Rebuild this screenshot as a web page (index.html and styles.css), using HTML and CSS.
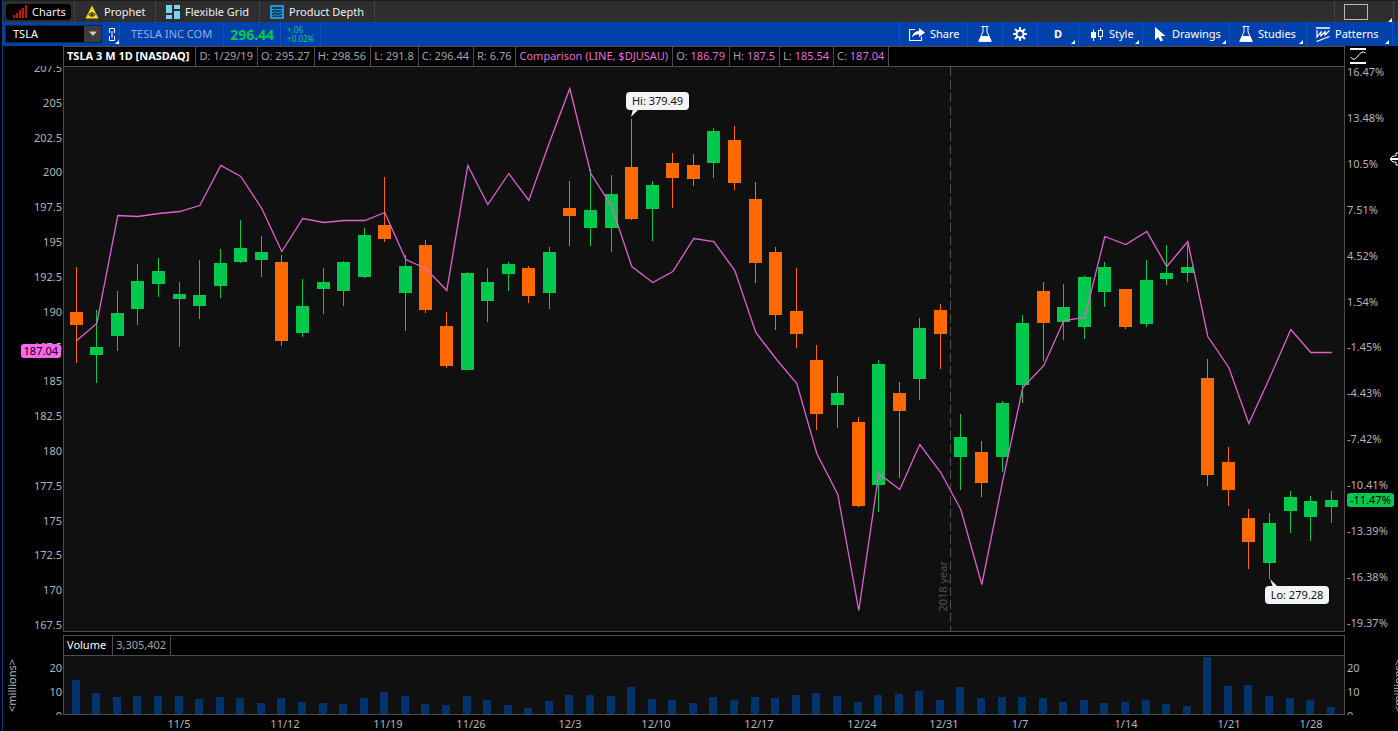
FILE: index.html
```html
<!DOCTYPE html>
<html lang="en">
<head>
<meta charset="utf-8">
<title>TSLA - Charts</title>
<link rel="stylesheet" href="styles.css">
</head>
<body>
<div class="app">
  <nav class="tabs">
    <button class="tab tab-charts"><span class="pill">
      <svg width="16" height="14" viewBox="0 0 16 14"><g fill="#c4160f"><rect x="0" y="10" width="2" height="3"/><rect x="3" y="8" width="2" height="5"/><rect x="6" y="5" width="2" height="8"/><rect x="9" y="3" width="2" height="10"/><rect x="12" y="0" width="2" height="13"/></g></svg>
      Charts</span></button>
    <button class="tab tab-prophet"><svg width="14" height="14" viewBox="0 0 14 14"><path d="M7 0.500L13.500 13.500H0.500Z" fill="#f7d823"/><path d="M3.500 9.500Q7 6 10.500 9.500Q7 13 3.500 9.500Z" fill="none" stroke="#3a3000"/><circle cx="7" cy="9.500" r="1.500" fill="#3a3000"/></svg>Prophet</button>
    <button class="tab tab-grid"><svg width="14" height="14" viewBox="0 0 14 14"><g fill="#7fd0f5"><rect x="0" y="0" width="6" height="8"/><rect x="0" y="10" width="6" height="4"/><rect x="8" y="0" width="6" height="4"/><rect x="8" y="6" width="6" height="8"/></g></svg>Flexible Grid</button>
    <button class="tab tab-depth"><svg width="14" height="14" viewBox="0 0 14 14"><rect x="1" y="1" width="12" height="12" fill="#0d3c5c" stroke="#2094dc" stroke-width="2"/><path d="M2 4.500H12M2 8L5 6.500L8 8L12 6M2 11L5 9.500L8 11L12 9" fill="none" stroke="#2094dc"/></svg>Product Depth</button>
    <button class="tab window-menu" aria-label="Window layout"><svg width="24" height="16" viewBox="0 0 24 16"><rect x="0.500" y="0.500" width="23" height="15" fill="none" stroke="#b8b8b8"/></svg><i class="corner"></i></button>
  </nav>

  <header class="toolbar">
    <div class="symbol-box">
      <input class="symbol" type="text" value="TSLA" aria-label="Symbol">
      <button class="symbol-arrow" aria-label="Symbol list"><svg width="10" height="6" viewBox="0 0 10 6"><path d="M1 0.500H9L5 5Z" fill="#c8c8c8"/></svg></button>
    </div>
    <button class="link-button" aria-label="Link symbol"><svg width="6" height="13" viewBox="0 0 6 13"><path d="M0.500 5V0.500H5.500V5M0.500 8V12.500H5.500V8M3 3V10" fill="none" stroke="#fff"/></svg><i class="corner"></i></button>
    <span class="company">TESLA INC COM</span>
    <strong class="price">296.44</strong>
    <span class="change"><span>+.06</span><span>+0.02%</span></span>
    <div class="tools">
      <button class="tool share"><svg width="16" height="13" viewBox="0 0 16 13"><path d="M6 1.500H0.500V12.500H12.500V8.500" fill="none" stroke="#fff" stroke-width="1.200"/><path d="M10 0L16 4.500L10 9V6.200Q6 6 3 9.500Q4 3.500 10 2.800Z" fill="#fff"/></svg>Share</button>
      <button class="tool icon-only" aria-label="Lab"><svg class="flask" width="14" height="16" viewBox="0 0 14 16"><path d="M3.500 0.500H10.500M5 0.500V6L0.800 15.300H13.200L9 6V0.500" fill="none" stroke="#fff"/><path d="M3 10H11L13.500 15.500H0.500Z" fill="#fff"/></svg></button>
      <button class="tool icon-only" aria-label="Settings"><svg width="14" height="14" viewBox="0 0 14 14"><circle cx="7" cy="7" r="3.500" fill="none" stroke="#fff" stroke-width="2"/><path d="M7 0V3M7 11V14M0 7H3M11 7H14M2 2L4.200 4.200M9.800 9.800L12 12M12 2L9.800 4.200M4.200 9.800L2 12" stroke="#fff" stroke-width="2"/></svg></button>
      <button class="tool period">D<i class="corner"></i></button>
      <button class="tool style"><svg width="12" height="13" viewBox="0 0 12 13"><path d="M2.500 1.500V13M9.500 0V12" stroke="#fff"/><rect x="0" y="4" width="5" height="6" fill="#fff"/><rect x="7.500" y="2.500" width="4" height="6" fill="#0041ab" stroke="#fff"/></svg>Style<i class="corner"></i></button>
      <button class="tool drawings"><svg width="12" height="15" viewBox="0 0 12 15"><path d="M1 0V13L4.200 10L6.500 14.500L9 13.500L7 9H11.500Z" fill="#fff"/></svg>Drawings<i class="corner"></i></button>
      <button class="tool studies"><svg class="flask" width="14" height="16" viewBox="0 0 14 16"><path d="M3.500 0.500H10.500M5 0.500V6L0.800 15.300H13.200L9 6V0.500" fill="none" stroke="#fff"/><path d="M3 10H11L13.500 15.500H0.500Z" fill="#fff"/></svg>Studies<i class="corner"></i></button>
      <button class="tool patterns"><svg width="14" height="15" viewBox="0 0 14 15"><path d="M0 1H14" stroke="#fff" stroke-width="1.500"/><path d="M1 3V10L5 5V9L9 4.500V8L13.500 3.500M0.500 14.500L13.500 9.500" fill="none" stroke="#fff" stroke-width="1.200"/></svg>Patterns<i class="corner"></i></button>
    </div>
  </header>

  <main class="workspace">
    <section class="row price-row">
      <div class="axis price-axis">
        <div class="price-labels">
          <span>207.5</span><span>205</span><span>202.5</span><span>200</span><span>197.5</span><span>195</span><span>192.5</span><span>190</span><span>187.5</span><span>185</span><span>182.5</span><span>180</span><span>177.5</span><span>175</span><span>172.5</span><span>170</span><span>167.5</span>
        </div>
        <span class="badge badge-comparison">187.04</span>
      </div>
      <div class="panel">
        <div class="quote">
          <b>TSLA 3 M 1D [NASDAQ]</b><span>D: 1/29/19</span><span>O: 295.27</span><span>H: 298.56</span><span>L: 291.8</span><span>C: 296.44</span><span>R: 6.76</span><span class="pink">Comparison (LINE, $DJUSAU)</span><span>O: <em>186.79</em></span><span>H: <em>187.5</em></span><span>L: <em>185.54</em></span><span>C: <em>187.04</em></span>
        </div>
        <div class="plot">
          <svg id="candles" viewBox="0 0 1280 564" preserveAspectRatio="none"></svg>
          <span class="year">2018 year</span>
          <span class="callout hi">Hi: 379.49<svg width="8" height="8" viewBox="0 0 8 8"><path d="M2 0H8L0 8Z" fill="#f4f4f4"/></svg></span>
          <span class="callout lo">Lo: 279.28<svg width="8" height="8" viewBox="0 0 8 8"><path d="M0 0L8 8H3Z" fill="#f4f4f4"/></svg></span>
        </div>
      </div>
      <div class="axis percent-axis">
        <svg class="scale-icon" width="16" height="17" viewBox="0 0 16 17"><path d="M0 2H16M0 16H16" stroke="#fff" stroke-width="2"/><path d="M0.500 10Q4 15 8 9T15.500 6" fill="none" stroke="#fff"/></svg>
        <span>16.47%</span><span>13.48%</span><span>10.5%</span><span>7.51%</span><span>4.52%</span><span>1.54%</span><span>-1.45%</span><span>-4.43%</span><span>-7.42%</span><span>-10.41%</span><span>-13.39%</span><span>-16.38%</span><span>-19.37%</span>
        <span class="badge badge-last">-11.47%</span>
        <svg class="pointer" width="9" height="14" viewBox="0 0 9 14"><path d="M9 1H7V4H4L1 7L4 10H7V13H9" fill="#000" stroke="#fff"/><path d="M2 7H9" stroke="#fff" stroke-width="2"/></svg>
      </div>
    </section>

    <section class="row volume-row">
      <div class="axis volume-axis"><span>20</span><span>10</span><span>0</span><span class="unit">&lt;millions&gt;</span></div>
      <div class="panel">
        <div class="quote"><span class="white">Volume</span><span>3,305,402</span></div>
        <div class="plot"><svg id="volume" viewBox="0 0 1280 58" preserveAspectRatio="none"></svg></div>
      </div>
      <div class="axis volume-axis right"><span>20</span><span>10</span><span>0</span><span class="unit">&lt;millions&gt;</span></div>
    </section>

    <div class="row date-row"><div class="dates" id="dates"></div></div>
  </main>
</div>
<script src="chart.js"></script>
</body>
</html>
```
FILE: styles.css
```css
* { box-sizing: border-box; }
html, body { height: 100%; }
body { margin: 0; background: #000; color: #b4b4b4; font: 11px/16px "Noto Sans", "Open Sans", sans-serif; overflow: hidden; }
button, input { font: inherit; color: #fff; border: 0; margin: 0; padding: 0; background: none; }
svg { display: block; flex: none; }

.app { display: flex; flex-direction: column; min-height: 100vh; margin-left: 2px; border-left: 1px solid #0b3f94; }

.tabs { display: flex; height: 22px; background: #2e2e2e; border-top: 1px solid #1c1c1c; }
.tab { display: flex; align-items: center; gap: 5px; padding: 0 10px; border-right: 1px solid #454545; color: #f0f0f0; white-space: nowrap; position: relative; }
.tab-charts { width: 72px; padding: 0 3px; }
.pill { display: flex; align-items: center; gap: 3px; width: 65px; height: 16px; padding: 0 7px; border-radius: 4px; background: #000; }
.tab-prophet { width: 81px; }
.tab-grid { width: 104px; }
.tab-depth { width: 115px; }
.window-menu { width: 60px; margin: 0 4px 0 auto; border-left: 1px solid #454545; padding: 0 9px; }
.corner { position: absolute; right: 3px; bottom: 2px; border-left: 4px solid transparent; border-bottom: 4px solid #fff; }
.window-menu .corner { right: 1px; bottom: 0; }

.toolbar { display: flex; align-items: center; height: 24px; background: #0041ab; }
.symbol-box { display: flex; width: 97px; height: 18px; margin-left: 2px; background: #000; border: 1px solid #1a2436; }
.symbol { flex: 1; min-width: 0; padding-left: 7px; outline: 0; }
.symbol-arrow { display: grid; place-items: center; width: 17px; background: #3c3c3c; }
.link-button { position: relative; display: flex; align-items: center; width: 18px; height: 24px; padding-left: 7px; border-right: 1px solid #0f52bb; }
.link-button .corner { right: 0; }
.company, .price, .change { height: 24px; border-right: 1px solid #0f52bb; }
.company { padding: 0 11px; line-height: 24px; color: #8fb0e8; }
.price { padding: 0 6px; font-size: 14px; line-height: 25px; color: #00c850; }
.change { display: flex; flex-direction: column; justify-content: center; padding: 0 6px; font-size: 8px; line-height: 9px; color: #00c878; }
.tools { display: flex; height: 24px; margin: 0 5px 0 auto; border-left: 1px solid #0f52bb; }
.tool { position: relative; display: flex; align-items: center; gap: 5px; padding: 0 9px; border-right: 1px solid #0f52bb; white-space: nowrap; }
.share { width: 68px; }
.icon-only { width: 35px; justify-content: center; }
.period { width: 41px; padding: 0 16px; font-weight: 700; }
.style { width: 64px; padding-left: 12px; gap: 6px; }
.drawings { width: 87px; padding-left: 11px; gap: 6px; }
.studies { width: 77px; }
.patterns { width: 86px; }

.workspace { flex: 1; display: flex; flex-direction: column; min-height: 0; }
.row { display: grid; grid-template-columns: 60px minmax(0, 1fr) 53px; }
.price-row { flex: 1; min-height: 0; margin-bottom: 3px; }
.panel { display: flex; flex-direction: column; min-width: 0; border: 1px solid #4c4c4c; background: #101010; }
.quote { display: flex; height: 20px; background: #000; border-bottom: 1px solid #4c4c4c; line-height: 18px; white-space: nowrap; }
.quote > * { padding: 0 4px 0 3px; border-right: 1px solid #4c4c4c; color: #a4a4a4; }
.quote b, .quote .white { padding-right: 6px; color: #fff; }
.quote .pink, .quote em { color: #e070d8; font-style: normal; }
.plot { position: relative; flex: 1; min-height: 0; }
.plot > svg { position: absolute; width: 100%; height: 100%; }

.axis { position: relative; }
.price-axis { margin-top: 20px; overflow: hidden; display: flex; flex-direction: column; }
.price-labels { flex: 1; display: flex; flex-direction: column; justify-content: space-between; margin: -6px 1px -1px 0; text-align: right; }
.percent-axis { display: flex; flex-direction: column; justify-content: space-between; padding: 18px 0 1px 2px; }
.scale-icon { position: absolute; left: 5px; top: 1px; }
.badge { position: absolute; height: 14px; padding: 0 3px; border-radius: 3px; line-height: 14px; color: #000; }
.badge-comparison { right: 2px; top: 49.1%; background: #ff66f0; }
.badge-last { left: 2px; top: 76.2%; background: #00c84c; }
.pointer { position: absolute; right: 0; top: 18.1%; }

.callout { position: absolute; height: 18px; padding: 0 6px; border-radius: 4px; background: #f4f4f4; color: #111; line-height: 18px; white-space: nowrap; }
.callout svg { position: absolute; left: 5px; }
.hi { left: 43.9%; top: 4.5%; }
.hi svg { top: 17px; }
.lo { left: 93.8%; top: 92.1%; }
.lo svg { top: -7px; }
.year { position: absolute; right: 30.8%; bottom: 19px; writing-mode: vertical-rl; transform: rotate(180deg); color: #505050; line-height: 14px; }

.volume-row { height: 80px; }
.volume-row .quote { flex: none; }
.volume-axis { display: flex; flex-direction: column; gap: 8px; padding: 25px 1px 0 0; overflow: hidden; text-align: right; }
.volume-axis span { flex: none; }
.volume-axis.right { padding: 25px 0 0 2px; text-align: left; }
.unit { position: absolute; left: 1px; bottom: 3px; writing-mode: vertical-rl; transform: rotate(180deg); }
.right .unit { left: auto; right: -8px; }
.date-row { height: 16px; }
.dates { grid-column: 2; position: relative; margin: 0 1px; }
.dates span { position: absolute; top: 2px; line-height: 14px; transform: translateX(-50%); }
```
FILE: chart.js
```js
// [high, body top, body bottom, low, rising, comparison, volume] in plot units
const days = [
  [267,312,325,363,0,340,34],[310,347,355,383,1,323,21],[291,313,336,351,1,215,17],[264,281,309,325,1,216,18],
  [258,271,284,297,1,213,18],[282,294,299,347,1,211,18],[260,295,306,319,1,205,15],[249,263,286,298,1,165,17],
  [220,248,262,263,1,176,16],[236,252,260,277,1,208,11],[255,262,341,346,0,251,16],[279,306,333,337,1,218,12],
  [268,282,289,314,1,222,11],[261,262,291,306,1,220,10],[228,235,277,278,1,220,16],[177,225,239,242,0,212,22],
  [255,266,293,331,1,259,18],[240,245,310,313,0,268,10],[312,326,366,368,0,290,9],[272,273,370,370,1,165,18],
  [268,282,301,322,1,204,14],[262,264,274,291,1,173,9],[266,268,296,303,0,200,6],[247,252,293,309,1,141,13],
  [181,208,216,246,0,88,19],[169,210,228,246,1,173,19],[175,194,228,252,1,206,18],[119,167,219,220,0,266,27],
  [181,185,209,241,1,282,15],[153,163,178,208,0,271,14],[154,165,179,186,0,238,11],[128,131,163,178,1,241,17],
  [126,140,183,190,0,270,14],[182,199,263,283,0,332,17],[247,252,315,330,0,358,16],[268,311,334,348,0,383,19],
  [345,360,414,430,0,453,21],[376,393,405,428,1,494,18],[417,422,506,507,0,610,12],[360,364,485,512,1,473,19],
  [382,393,411,478,0,489,20],[318,328,379,400,1,444,23],[304,310,334,369,0,472,14],[414,437,457,490,1,509,27],
  [441,452,483,497,0,584,16],[401,403,457,472,1,480,17],[315,323,385,403,1,387,17],[282,291,323,361,0,365,16],
  [284,307,322,340,1,320,12],[276,277,327,339,1,317,14],[262,267,292,307,1,236,11],[289,289,327,329,0,244,12],
  [260,280,324,327,1,231,14],[245,273,279,285,1,266,10],[244,267,273,282,1,241,8],[359,378,475,486,0,336,57],
  [447,462,490,506,0,367,28],[509,518,542,569,0,423,29],[513,523,563,579,1,377,18],[491,497,511,533,1,329,16],
  [496,501,517,541,1,352,14],[491,500,507,523,1,352,7]
];
const width = 1280, top0 = 67, step = 1255 / 61;
const column = i => Math.floor(12 + i * step + 0.2);

let candles = '<path d="M886.5 0V564" stroke="#505050" stroke-dasharray="9 4"/>';
let bars = '';
const line = [];
days.forEach(([high, open, close, low, up, compare, volume], i) => {
  const x = column(i), fill = up ? '#00c84c' : '#ff6a00';
  candles += `<rect x="${x}" y="${high - top0}" width="1" height="${low - high}" fill="${fill}"/>`;
  candles += `<rect x="${x - 6}" y="${open - top0}" width="13" height="${close - open}" fill="${fill}"/>`;
  bars += `<rect x="${x - 4}" y="${58 - volume}" width="8" height="${volume}" fill="#00336b"/>`;
  line.push(`${x + 0.8},${compare - top0 + 0.5}`);
});
candles += `<polyline points="${line.join(' ')}" fill="none" stroke="#e060d0" stroke-width="1.3"/>`;
document.getElementById('candles').innerHTML = candles;
document.getElementById('volume').innerHTML = bars;

const dates = [['11/5',115],['11/12',221],['11/19',324],['11/26',407],['12/3',506],['12/10',592],['12/17',695],
  ['12/24',798],['12/31',880],['1/7',956],['1/14',1062],['1/21',1165],['1/28',1247]];
document.getElementById('dates').innerHTML =
  dates.map(([text, x]) => `<span style="left:${x / width * 100}%">${text}</span>`).join('');
```
